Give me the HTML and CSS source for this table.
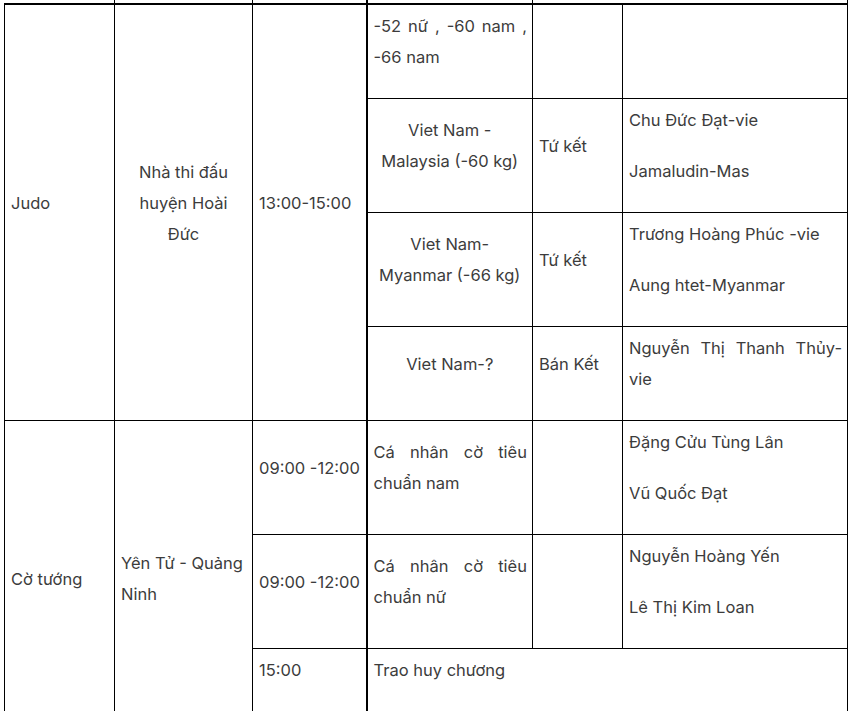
FILE: index.html
```html
<!DOCTYPE html>
<html lang="vi">
<head>
<meta charset="utf-8">
<link rel="stylesheet" href="styles.css">
</head>
<body>
<div class="wrap">
<table class="sched">
  <colgroup>
    <col class="c1"><col class="c2"><col class="c3"><col class="c4"><col class="c5"><col class="c6">
  </colgroup>
  <tr class="prev">
    <td class="noleft"></td><td></td><td></td><td class="thick"></td><td colspan="2"></td>
  </tr>
  <tr class="firstrow">
    <td rowspan="4"><p>Judo</p></td>
    <td rowspan="4" class="center"><p>Nhà thi đấu huyện Hoài Đức</p></td>
    <td rowspan="4"><p>13:00-15:00</p></td>
    <td class="thick top justify"><p>-52 nữ , -60 nam , -66 nam</p></td>
    <td></td>
    <td></td>
  </tr>
  <tr>
    <td class="thick center"><p>Viet Nam - Malaysia (-60 kg)</p></td>
    <td><p>Tứ kết</p></td>
    <td class="top"><p>Chu Đức Đạt-vie</p><p>Jamaludin-Mas</p></td>
  </tr>
  <tr>
    <td class="thick center"><p>Viet Nam- Myanmar (-66 kg)</p></td>
    <td><p>Tứ kết</p></td>
    <td class="top"><p>Trương Hoàng Phúc -vie</p><p>Aung htet-Myanmar</p></td>
  </tr>
  <tr>
    <td class="thick center"><p>Viet Nam-?</p></td>
    <td><p>Bán Kết</p></td>
    <td class="top justify"><p>Nguyễn Thị Thanh Thủy-vie</p></td>
  </tr>
  <tr>
    <td rowspan="3"><p>Cờ tướng</p></td>
    <td rowspan="3"><p>Yên Tử - Quảng Ninh</p></td>
    <td><p>09:00 -12:00</p></td>
    <td class="thick justify"><p>Cá nhân cờ tiêu chuẩn nam</p></td>
    <td></td>
    <td class="top"><p>Đặng Cửu Tùng Lân</p><p>Vũ Quốc Đạt</p></td>
  </tr>
  <tr>
    <td><p>09:00 -12:00</p></td>
    <td class="thick justify"><p>Cá nhân cờ tiêu chuẩn nữ</p></td>
    <td></td>
    <td class="top"><p>Nguyễn Hoàng Yến</p><p>Lê Thị Kim Loan</p></td>
  </tr>
  <tr class="last">
    <td class="top"><p>15:00</p></td>
    <td colspan="3" class="thick top"><p>Trao huy chương</p></td>
  </tr>
</table>
</div>
</body>
</html>
```
FILE: styles.css
```css
html, body {
  margin: 0;
  padding: 0;
  background: #ffffff;
}

body {
  font-family: "Inter", "Liberation Sans", sans-serif;
  font-size: 16.5px;
  color: #3c3c3c;
}

.wrap {
  padding-left: 4px;
  padding-right: 1px;
}

.sched {
  border-collapse: collapse;
  table-layout: fixed;
  width: 843px;
  margin-top: -27px;
}

.c1 { width: 110px; }
.c2 { width: 138px; }
.c3 { width: 114px; }
.c4 { width: 166px; }
.c5 { width: 90px; }
.c6 { width: 225px; }

.sched td {
  border: 1px solid #000;
  padding: 6px 5px 5px 6px;
  vertical-align: middle;
  text-align: left;
  line-height: 31px;
}

.sched p {
  margin: 0 0 20px 0;
}

.sched .prev td {
  height: 30px;
  padding: 0;
  border-top: none;
  border-bottom: 2px solid #000;
}

.sched .prev td.noleft {
  border-left: none;
}

.sched .last {
  height: 108px;
}

.sched td.top {
  vertical-align: top;
}

.sched td.thick {
  border-left: 2px solid #000;
}

.sched td.center {
  text-align: center;
  padding-left: 8px;
  padding-right: 8px;
}

.sched td.justify {
  text-align: justify;
}
```
